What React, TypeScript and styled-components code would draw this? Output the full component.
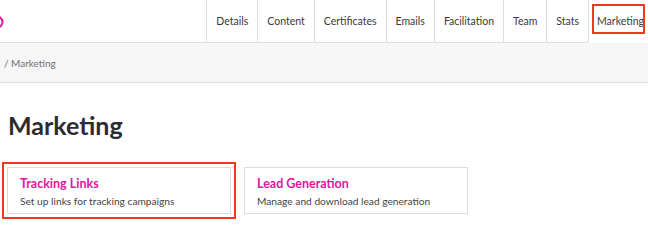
import styled, { createGlobalStyle, css } from "styled-components";

const GlobalStyle = createGlobalStyle`
  html {
    overflow: hidden;
  }
  body {
    margin: 0;
    padding: 0;
    min-height: 100vh;
    background: #ffffff;
    font-family: Lato, "Open Sans", sans-serif;
    color: #333333;
  }
`;

const magenta = "#e2159b";
const annotate = "#f2361f";

const tabs = [
  "Details",
  "Content",
  "Certificates",
  "Emails",
  "Facilitation",
  "Team",
  "Stats",
  "Marketing",
];

const cards = [
  {
    title: "Tracking Links",
    text: "Set up links for tracking campaigns",
    marked: true,
  },
  {
    title: "Lead Generation",
    text: "Manage and download lead generation",
    marked: false,
  },
];

export default function App() {
  return (
    <>
      <GlobalStyle />
      <Header>
        <Brand>
          <svg width="4" height="14" viewBox="0 0 4 14">
            <circle cx="-3" cy="7" r="5.5" fill="none" stroke={magenta} strokeWidth="2" />
          </svg>
        </Brand>
        <Tabs>
          {tabs.map((t) => (
            <Tab key={t} $active={t == "Marketing"}>
              {t}
            </Tab>
          ))}
        </Tabs>
      </Header>

      <Breadcrumb>/ Marketing</Breadcrumb>

      <Main>
        <Title>Marketing</Title>
        <CardRow>
          {cards.map((c) => (
            <Card key={c.title} $marked={c.marked}>
              <CardTitle>{c.title}</CardTitle>
              <CardText>{c.text}</CardText>
            </Card>
          ))}
        </CardRow>
      </Main>
    </>
  );
}

const Header = styled.header`
  display: flex;
  height: 43px;
  margin-right: -5px;
`;

const Brand = styled.div`
  flex: 1;
  display: flex;
  align-items: center;
  padding-top: 2px;
  border-bottom: 1px solid #dedede;
`;

const Tabs = styled.nav`
  display: flex;
`;

const Tab = styled.a<{ $active?: boolean }>`
  position: relative;
  display: flex;
  align-items: center;
  padding: 0 9px;
  font-size: 10.5px;
  color: #3a3a3a;
  border-left: 1px solid #dedede;
  border-bottom: 1px solid ${({ $active }) => ($active ? "transparent" : "#dedede")};
  cursor: pointer;

  ${({ $active }) =>
    $active &&
    css`
      padding: 0 9px 0 8px;
      &::after {
        content: "";
        position: absolute;
        left: 3px;
        top: 4px;
        width: 49px;
        height: 26px;
        border: 2.5px solid ${annotate};
      }
    `}
`;

const Breadcrumb = styled.div`
  display: flex;
  align-items: center;
  height: 39px;
  padding-left: 4px;
  background: #f6f6f6;
  border-bottom: 1px solid #e2e2e2;
  font-size: 10px;
  color: #707070;
`;

const Main = styled.main`
  padding: 0 7px 20px;
`;

const Title = styled.h1`
  margin: 26px 0 0 1px;
  font-size: 25px;
  line-height: 32px;
  font-weight: 700;
  color: #2c2c2e;
`;

const CardRow = styled.div`
  display: flex;
  gap: 13px;
  margin-top: 26px;
`;

const Card = styled.div<{ $marked?: boolean }>`
  box-sizing: border-box;
  width: 224px;
  height: 47px;
  padding: 8px 12px;
  border: 1px solid #dcdcdc;
  background: #ffffff;
  cursor: pointer;

  ${({ $marked }) =>
    $marked &&
    css`
      outline: 2.5px solid ${annotate};
      outline-offset: 3px;
    `}
`;

const CardTitle = styled.div`
  font-size: 12.5px;
  line-height: 16px;
  font-weight: 700;
  color: ${magenta};
`;

const CardText = styled.div`
  margin-top: 2px;
  font-size: 10.2px;
  line-height: 14px;
  color: #444444;
`;
